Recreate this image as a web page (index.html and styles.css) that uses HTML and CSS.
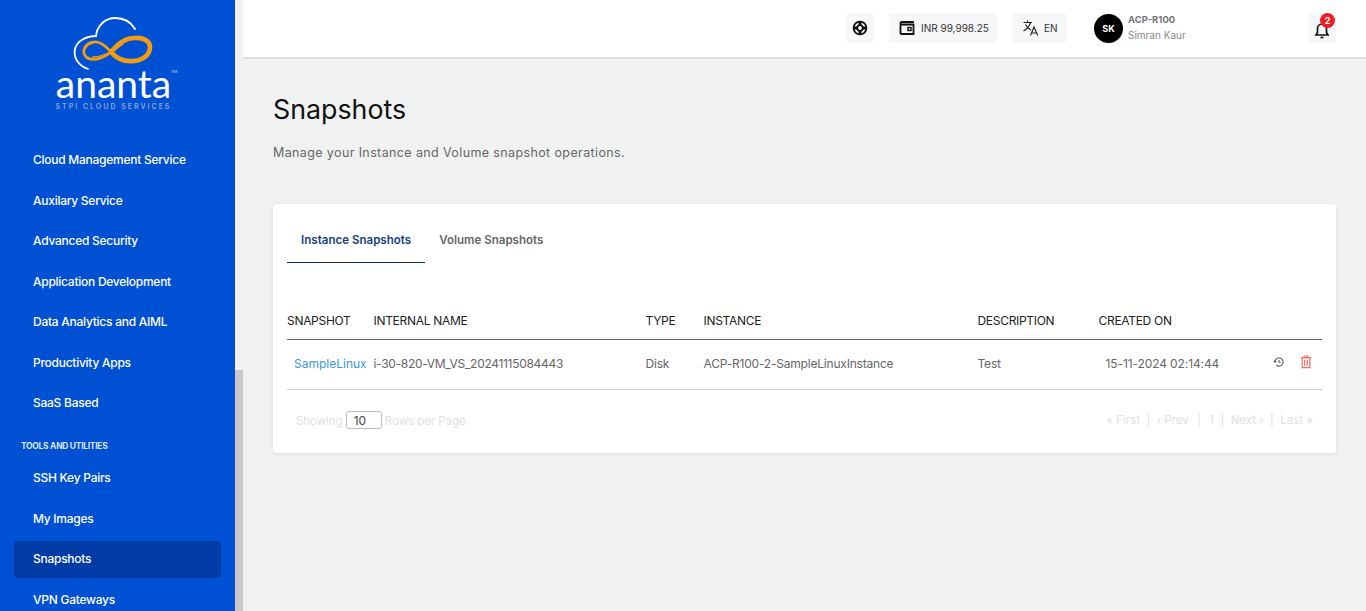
FILE: index.html
```html
<!DOCTYPE html>
<html>
<head>
<title>Snapshots</title>
<meta charset="UTF-8" />
<link rel="stylesheet" href="styles.css">
</head>
<body>
<aside class="sidebar">
	<div class="brand">
		<svg class="brand-mark" width="90" height="56" viewBox="70 15 90 56">
			<path d="M88 69 C79 66 73 58 75 49 C77 41 86 36 96 36 C97 26 105 18 115 18 C124 18 131 22 135 29" fill="none" stroke="#fff" stroke-width="1.800" stroke-linecap="round"/>
			<path d="M111 52 C105 45 100 41 94 42 C87 43 83 48 84 53 C85 58 90 60 97 59 C103 58 106 56 111 52" fill="none" stroke="#f39c12" stroke-width="2.800"/>
			<path d="M111 52 C116 58 124 62 134 61 C144 60 150 54 150 47 C150 41 143 37 134 38 C124 38 117 45 111 52" fill="none" stroke="#f39c12" stroke-width="4.600"/>
			<path d="M92 57 C102 57 113 52 123 44" fill="none" stroke="#f39c12" stroke-width="1.300"/>
		</svg>
		<div class="brand-name">ananta<sup>TM</sup></div>
		<div class="brand-sub">STPI CLOUD SERVICES</div>
	</div>
	<nav class="nav">
		<a class="nav-item">Cloud Management Service</a>
		<a class="nav-item">Auxilary Service</a>
		<a class="nav-item">Advanced Security</a>
		<a class="nav-item">Application Development</a>
		<a class="nav-item">Data Analytics and AIML</a>
		<a class="nav-item">Productivity Apps</a>
		<a class="nav-item">SaaS Based</a>
		<div class="nav-label">TOOLS AND UTILITIES</div>
		<a class="nav-item">SSH Key Pairs</a>
		<a class="nav-item">My Images</a>
		<a class="nav-item active">Snapshots</a>
		<a class="nav-item">VPN Gateways</a>
	</nav>
</aside>
<div class="scrollbar"><div class="scrollbar-thumb"></div></div>
<div class="main">
	<header class="topbar">
		<div class="chip chip-icon">
			<svg width="16" height="16" viewBox="0 0 16 16" fill="none" stroke="#111" stroke-width="1.800"><circle cx="8" cy="8" r="6.400"/><circle cx="8" cy="8" r="2.800"/><path d="M8 1.500V5M8 11V14.500M1.500 8H5M11 8H14.500" stroke-width="2.800"/></svg>
		</div>
		<div class="chip chip-wallet">
			<svg width="16" height="16" viewBox="0 0 16 16" fill="none" stroke="#111" stroke-width="1.800"><path d="M14 3V2H2.500A1 1 0 0 0 1.500 3V13A1 1 0 0 0 2.500 14H14.500V4.500H2"/><rect x="9" y="7.500" width="3" height="3" stroke-width="1.400"/></svg>
			<span>INR 99,998.25</span>
		</div>
		<div class="chip chip-lang">
			<svg width="18" height="18" viewBox="0 0 18 18" fill="none" stroke="#222" stroke-width="1.100"><path d="M1.500 3.500H10M5.500 1.500V3.500M8.500 3.500C7.500 7.500 5 10 1.500 12M3.500 5.500C4.500 8 6.500 10 9 11M8.500 16.500 12 8 15.800 16.500M9.700 14H14.700"/></svg>
			<span>EN</span>
		</div>
		<div class="user">
			<div class="avatar">SK</div>
			<div class="user-text">
				<div class="user-org">ACP-R100</div>
				<div class="user-name">Simran Kaur</div>
			</div>
		</div>
		<div class="chip chip-bell">
			<svg class="bell" width="18" height="18" viewBox="0 0 18 18" fill="none" stroke="#111" stroke-width="1.700"><path d="M3 14H15L13.500 11.500V7.500A4.500 4.500 0 0 0 4.500 7.500V11.500Z"/><path d="M7.500 16.500H10.500"/></svg>
			<span class="badge">2</span>
		</div>
	</header>
	<main class="content">
		<h1 class="title">Snapshots</h1>
		<p class="desc">Manage your Instance and Volume snapshot operations.</p>
		<section class="card">
			<div class="tabs">
				<div class="tab current">Instance Snapshots</div>
				<div class="tab">Volume Snapshots</div>
			</div>
			<table class="grid">
				<colgroup>
					<col class="c1"><col class="c2"><col class="c3"><col class="c4"><col class="c5"><col class="c6"><col>
				</colgroup>
				<thead>
					<tr><th>SNAPSHOT</th><th>INTERNAL NAME</th><th>TYPE</th><th>INSTANCE</th><th>DESCRIPTION</th><th>CREATED ON</th><th></th></tr>
				</thead>
				<tbody>
					<tr>
						<td class="link-cell">SampleLinux</td>
						<td class="name-cell">i-30-820-VM_VS_20241115084443</td>
						<td>Disk</td>
						<td>ACP-R100-2-SampleLinuxInstance</td>
						<td>Test</td>
						<td class="date-cell">15-11-2024 02:14:44</td>
						<td class="actions">
							<svg width="12" height="12" viewBox="0 0 14 14" fill="none" stroke="#555" stroke-width="1.200"><path d="M2.200 7A4.800 4.800 0 1 1 4 10.800"/><path d="M.8 5.500 2.200 7.200 3.800 5.700"/><path d="M7 4.800V7.200H9"/></svg>
							<svg width="12" height="14" viewBox="0 0 14 16" fill="none" stroke="#ee6a60" stroke-width="1.400"><path d="M1 3H13M5 3V1H9V3M2.500 3V14.500H11.500V3M5.500 5.500V12.500M8.500 5.500V12.500"/></svg>
						</td>
					</tr>
				</tbody>
			</table>
			<div class="pager">
				<div class="pager-left">Showing <span class="size-box">10</span> Rows per Page</div>
				<div class="pager-right">
					<span>« First</span><span>|</span><span>‹ Prev</span><span class="pager-sep">|</span><span>1</span><span>|</span><span>Next ›</span><span>|</span><span>Last »</span>
				</div>
			</div>
		</section>
	</main>
</div>
</body>
</html>
```

FILE: styles.css
```css
*{
	box-sizing: border-box;
}
html, body{
	height: 100%;
}
body{
	margin: 0;
	display: flex;
	overflow: hidden;
	font-family: Inter, "Liberation Sans", sans-serif;
	background: #f0f2f1;
	color: #666;
}
.sidebar{
	width: 235px;
	flex: none;
	height: 100%;
	overflow: hidden;
	background: #0050d4;
	color: #fff;
}
.brand{
	height: 138px;
	padding-top: 15px;
	display: flex;
	flex-direction: column;
	align-items: center;
}
.brand-mark{
	display: block;
	margin-left: -5px;
}
.brand-name{
	font-family: Lato, sans-serif;
	font-size: 39px;
	line-height: 30px;
	font-weight: 400;
	margin-top: -3px;
	margin-left: -8px;
	position: relative;
}
.brand-name sup{
	position: absolute;
	top: 1px;
	left: 100%;
	font-size: 4px;
	line-height: 6px;
	letter-spacing: 0;
	color: #cfe0ff;
}
.brand-sub{
	font-size: 7px;
	font-weight: 600;
	letter-spacing: 2px;
	line-height: 10px;
	margin-top: 4px;
	margin-left: -8px;
	color: #8aa6d8;
}
.nav-item{
	display: block;
	height: 36.500px;
	line-height: 36px;
	margin: 4px 14px;
	padding-left: 19px;
	border-radius: 4px;
	font-size: 12px;
	font-weight: 500;
	letter-spacing: -.26px;
	white-space: nowrap;
}
.nav-item.active{
	background: #003ba6;
}
.nav-label{
	height: 30.500px;
	padding-left: 21px;
	padding-top: 13px;
	font-size: 8.500px;
	line-height: 14px;
	font-weight: 700;
	letter-spacing: -.3px;
	color: #dbe6fb;
}
.scrollbar{
	width: 8px;
	flex: none;
	height: 100%;
	background: #f1f1f1;
	display: flex;
	flex-direction: column;
	justify-content: flex-end;
}
.scrollbar-thumb{
	height: 241px;
	background: #c8c8c8;
}
.main{
	flex: 1;
	min-width: 0;
}
.topbar{
	height: 59px;
	background: #fff;
	border-bottom: 2px solid #dedede;
	padding: 13px 30px 0 0;
	display: flex;
	align-items: flex-start;
	justify-content: flex-end;
}
.chip{
	height: 30px;
	background: #f6f7f8;
	border-radius: 4px;
	display: flex;
	align-items: center;
	font-size: 10px;
	color: #333;
}
.chip-icon{
	width: 28px;
	justify-content: center;
	margin-right: 15px;
}
.chip-wallet{
	width: 108px;
	padding-left: 10px;
	gap: 6px;
	margin-right: 15px;
}
.chip-lang{
	width: 55px;
	padding-left: 10px;
	gap: 4px;
	margin-right: 27px;
}
.user{
	width: 214px;
	display: flex;
	align-items: center;
	gap: 5px;
	height: 30px;
}
.avatar{
	width: 29px;
	height: 29px;
	border-radius: 50%;
	background: #000;
	color: #fff;
	font-size: 9px;
	font-weight: 700;
	display: flex;
	align-items: center;
	justify-content: center;
}
.user-text{
	margin-top: -1px;
}
.user-org{
	font-size: 9.500px;
	font-weight: 700;
	line-height: 15px;
	color: #777;
}
.user-name{
	font-size: 10px;
	line-height: 16px;
	color: #888;
}
.chip-bell{
	width: 28px;
	justify-content: center;
	position: relative;
}
.bell{
	margin-top: 3px;
}
.badge{
	position: absolute;
	top: 0;
	right: 1px;
	width: 15px;
	height: 15px;
	border-radius: 50%;
	background: #ee1c25;
	color: #fff;
	font-size: 9px;
	font-weight: 700;
	line-height: 15px;
	text-align: center;
}
.content{
	padding: 0 30px;
}
.title{
	margin: 0;
	padding-top: 34px;
	font-size: 26.800px;
	line-height: 32px;
	font-weight: 400;
	color: #111;
}
.desc{
	margin: 0;
	padding-top: 18px;
	font-size: 12.500px;
	line-height: 20px;
	letter-spacing: .38px;
	color: #666;
}
.card{
	margin-top: 41px;
	height: 249px;
	background: #fff;
	border-radius: 4px;
	box-shadow: 0 1px 4px rgba(0,0,0,.08);
	padding: 0 14px;
}
.tabs{
	display: flex;
	height: 59px;
}
.tab{
	padding: 27px 14px 0;
	font-size: 11.500px;
	line-height: 18px;
	font-weight: 600;
	letter-spacing: .03px;
	color: #666;
}
.tab.current{
	color: #153e83;
	border-bottom: 1px solid #0d2f6b;
}
.grid{
	width: 100%;
	margin-top: 39px;
	border-collapse: collapse;
	table-layout: fixed;
	font-size: 12px;
}
.c1{ width: 86.500px; }
.c2{ width: 272px; }
.c3{ width: 58px; }
.c4{ width: 274px; }
.c5{ width: 121px; }
.c6{ width: 158px; }
.grid th{
	height: 37px;
	padding: 1px 0 0;
	text-align: left;
	font-weight: 400;
	color: #222;
	border-bottom: 1px solid #666;
	white-space: nowrap;
	letter-spacing: -.3px;
}
.grid td{
	height: 50px;
	padding: 0 0 2px;
	border-bottom: 1px solid #ccc;
	white-space: nowrap;
	letter-spacing: -.2px;
	color: #666;
}
.grid td.link-cell{
	padding-left: 7px;
	letter-spacing: 0;
	color: #3a97ea;
}
.grid td.name-cell{
	letter-spacing: -.3px;
}
.grid td.date-cell{
	padding-left: 7px;
	letter-spacing: -.1px;
}
.grid td.actions{
	padding-left: 16.500px;
	padding-bottom: 6px;
}
.actions svg{
	display: inline-block;
	vertical-align: middle;
	margin-right: 12px;
}
.pager{
	display: flex;
	justify-content: space-between;
	padding: 21px 9px 0;
	font-size: 11.500px;
	line-height: 18px;
	color: #e0e0e0;
}
.pager-left{
	letter-spacing: -.06px;
}
.pager-right{
	display: flex;
	gap: 6.400px;
}
.pager-sep{
	margin: 0 2px;
}
.size-box{
	display: inline-block;
	width: 36px;
	height: 18px;
	padding-left: 7px;
	border: 1px solid #bbb;
	border-radius: 3px;
	font-size: 12px;
	color: #444;
	line-height: 17px;
}
```
